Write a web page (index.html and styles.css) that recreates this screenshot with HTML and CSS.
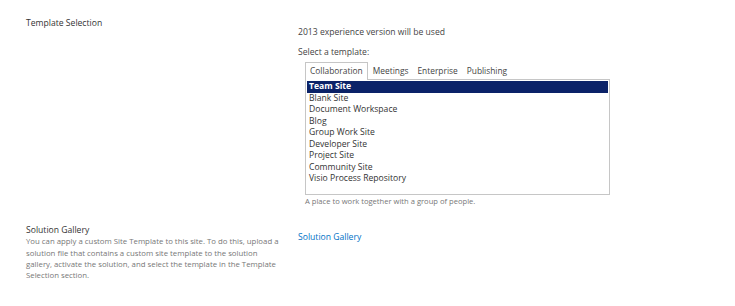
FILE: index.html
```html
<!DOCTYPE html>
<html lang="en">

<head>
    <meta charset="UTF-8">
    <title>New Site - Template Selection</title>
    <link rel="stylesheet" href="styles.css">
</head>

<body>
    <div class="form">

        <div class="section">
            <div class="section-info">
                <h3 class="section-title">Template Selection</h3>
            </div>
            <div class="section-body">
                <p class="version-note">2013 experience version will be used</p>
                <p class="field-label">Select a template:</p>
                <div class="template-picker">
                    <ul class="tabs">
                        <li class="tab active">Collaboration</li>
                        <li class="tab">Meetings</li>
                        <li class="tab">Enterprise</li>
                        <li class="tab">Publishing</li>
                    </ul>
                    <ul class="template-list">
                        <li class="selected">Team Site</li>
                        <li>Blank Site</li>
                        <li>Document Workspace</li>
                        <li>Blog</li>
                        <li>Group Work Site</li>
                        <li>Developer Site</li>
                        <li>Project Site</li>
                        <li>Community Site</li>
                        <li>Visio Process Repository</li>
                    </ul>
                    <p class="template-desc">A place to work together with a group of people.</p>
                </div>
            </div>
        </div>

        <div class="section">
            <div class="section-info">
                <h3 class="section-title">Solution Gallery</h3>
                <p class="section-desc">You can apply a custom Site Template to this site. To do this, upload a solution file that contains a custom site template to the solution gallery, activate the solution, and select the template in the Template Selection section.</p>
            </div>
            <div class="section-body">
                <a class="link" href="#">Solution Gallery</a>
            </div>
        </div>

    </div>
</body>

</html>
```

FILE: styles.css
```css
body {
    margin: 0;
    background-color: #fff;
    font-family: 'Open Sans', 'Noto Sans', sans-serif;
    color: #444;
}

.form {
    padding: 16px 0 0 26px;
}

.section {
    display: grid;
    grid-template-columns: 272px 1fr;
}

.section + .section {
    margin-top: 17px;
}

.section-title {
    margin: 2px 0 0;
    font-size: 8.6px;
    font-weight: normal;
    color: #333;
    line-height: 11.3px;
}

.section-desc {
    margin: 0;
    font-size: 7.8px;
    line-height: 11.3px;
    color: #777;
    width: 253px;
}

.version-note {
    margin: 10px 0 0;
    font-size: 8.6px;
    line-height: 12px;
    color: #444;
}

.field-label {
    margin: 8px 0 0;
    font-size: 8.6px;
    line-height: 12px;
    color: #444;
}

.template-picker {
    margin-left: 7px;
    margin-top: 4px;
    width: 305px;
}

.tabs {
    list-style: none;
    margin: 0;
    padding: 0;
    display: flex;
    gap: 1px;
}

.tab {
    font-size: 8.4px;
    line-height: 16px;
    padding: 0 3px;
    color: #444;
    border: 1px solid transparent;
    border-bottom: none;
}

.tab.active {
    padding: 0 4px 1px;
    border-color: #c6c6c6;
    background-color: #fff;
    position: relative;
    top: 1px;
    margin-top: -1px;
}

.template-list {
    list-style: none;
    margin: 0;
    padding: 1px 1px 14px;
    height: 99px;
    border: 1px solid #c6c6c6;
}

.template-list li {
    font-size: 8.6px;
    line-height: 11.5px;
    color: #333;
    padding-left: 2px;
}

.template-list li.selected {
    background-color: #0b2268;
    color: #fff;
    font-weight: bold;
}

.template-desc {
    margin: 1px 0 0;
    font-size: 7.6px;
    line-height: 10px;
    color: #777;
}

.link {
    display: inline-block;
    margin-top: 7px;
    font-size: 8.6px;
    line-height: 12px;
    color: #0072c6;
    text-decoration: none;
}
```
